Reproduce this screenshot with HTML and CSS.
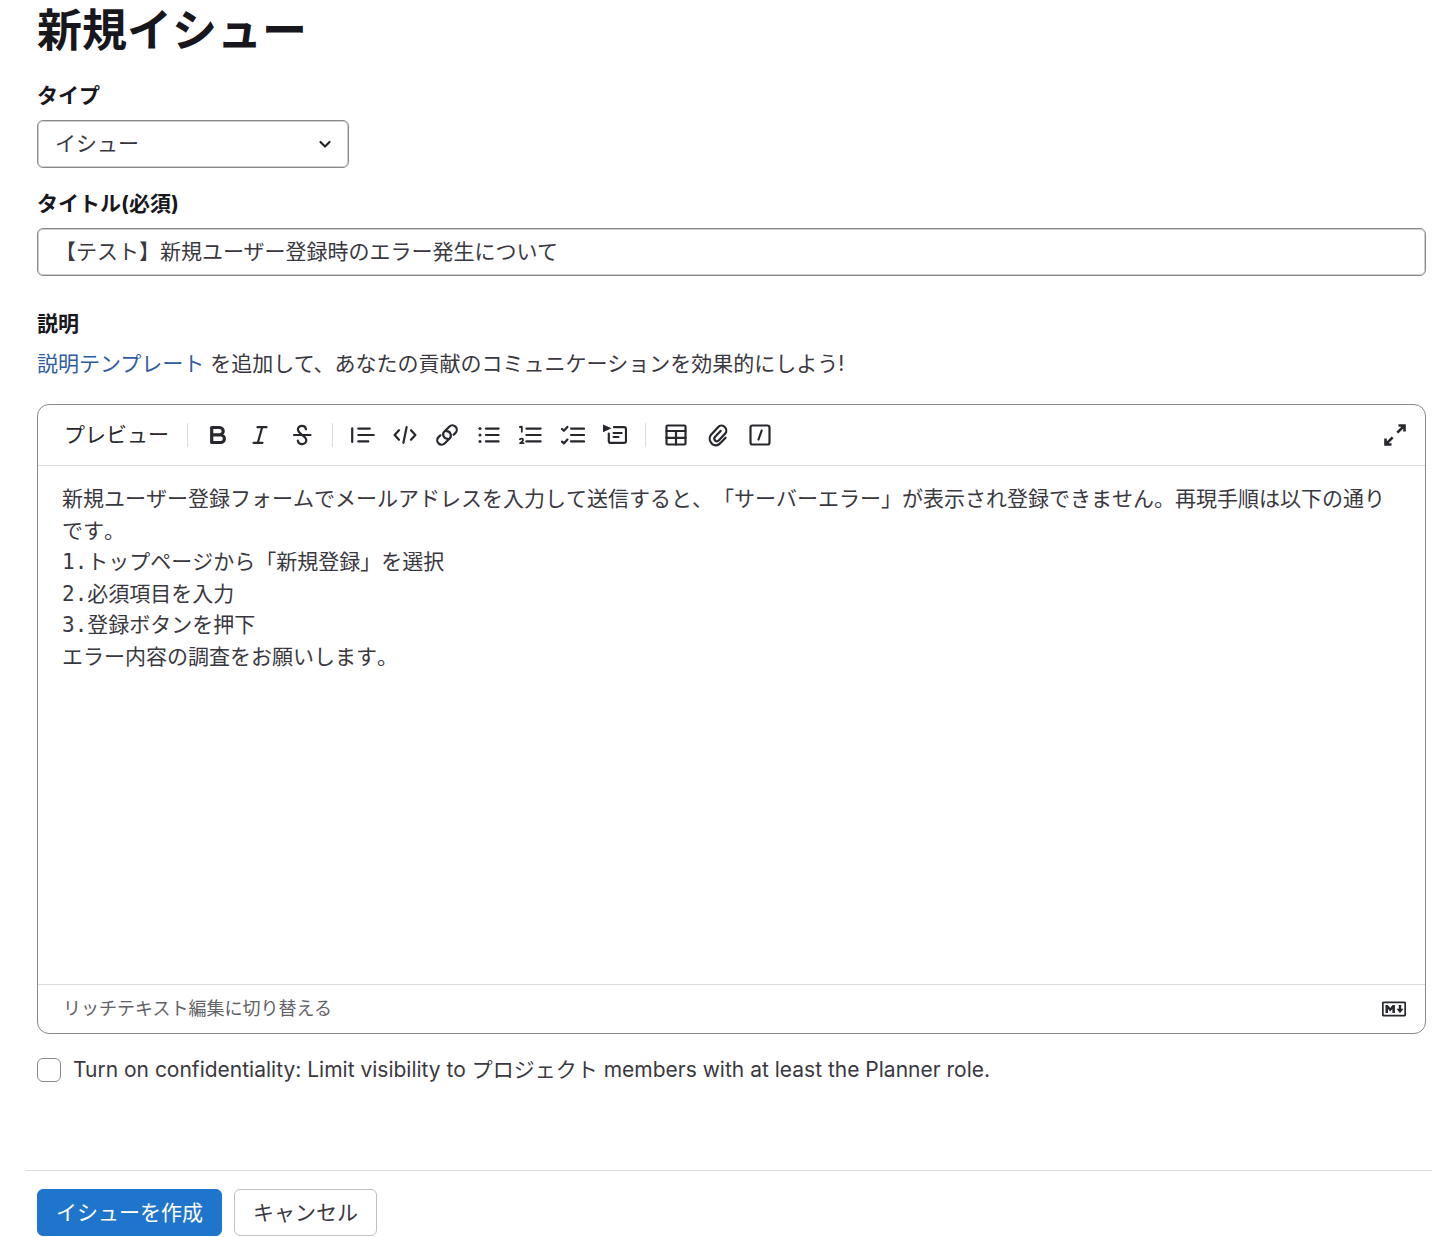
FILE: index.html
```html
<!DOCTYPE html>
<html lang="ja">
<head>
<meta charset="utf-8">
<meta name="viewport" content="width=device-width, initial-scale=1">
<title>新規イシュー</title>
<link rel="stylesheet" href="styles.css">
</head>
<body>
<main class="page">
  <h1 class="page-title">新規イシュー</h1>
  <form class="issue-form">
    <div class="field">
      <label class="field-label" for="issue-type">タイプ</label>
      <div class="select-wrap">
        <select class="control select" id="issue-type"><option>イシュー</option></select>
        <svg class="icon chevron" viewBox="0 0 24 24"><path d="M7.500 10l4.500 4.500 4.500-4.500"/></svg>
      </div>
    </div>
    <div class="field">
      <label class="field-label" for="issue-title">タイトル(必須)</label>
      <input class="control text-input" id="issue-title" type="text" value="【テスト】新規ユーザー登録時のエラー発生について">
    </div>
    <div class="field description">
      <label class="field-label" for="issue-description">説明</label>
      <p class="help"><a class="link" href="#">説明テンプレート</a> を追加して、あなたの貢献のコミュニケーションを効果的にしよう!</p>
      <div class="editor">
        <div class="toolbar">
          <button class="preview" type="button">プレビュー</button>
          <span class="divider"></span>
          <div class="tools">
            <button class="tool" type="button" aria-label="太字"><svg class="icon" viewBox="0 0 24 24"><path class="heavy" d="M5.700 4.500h7.800a3.700 3.700 0 0 1 0 7.400H5.700zM5.700 11.900h8.900a3.800 3.800 0 0 1 0 7.600H5.700z"/></svg></button>
            <button class="tool" type="button" aria-label="斜体"><svg class="icon" viewBox="0 0 24 24"><path d="M9.500 4.200h9M5.500 19.800h9M14.200 4.200l-4.400 15.600"/></svg></button>
            <button class="tool" type="button" aria-label="取り消し線"><svg class="icon" viewBox="0 0 24 24"><path d="M16 6.300C15.600 4 14 2.900 12 2.900c-2.300 0-4.100 1.500-4.100 3.700 0 2.400 1.900 3.600 4.200 5.400 2.500 1.700 4.200 2.900 4.200 5.300 0 2.200-1.800 3.800-4.200 3.800-2.200 0-3.900-1.300-4.300-3.500M4 12h16.500"/></svg></button>
          </div>
          <span class="divider"></span>
          <div class="tools">
            <button class="tool" type="button" aria-label="引用"><svg class="icon" viewBox="0 0 24 24"><path d="M1.200 5.300v13.600M7.300 5.600h11.500M7.300 12h15.500M7.300 18.400h10"/></svg></button>
            <button class="tool" type="button" aria-label="コード"><svg class="icon" viewBox="0 0 24 24"><path d="M6 7.200L1.600 12 6 16.800M18 7.200l4.400 4.800-4.400 4.800M13.600 4.200l-3.200 15.600"/></svg></button>
            <button class="tool" type="button" aria-label="リンク"><svg class="icon" viewBox="0 0 24 24"><path d="M18.600 11.800l1.900-1.900a4.200 4.200 0 0 0-6.300-6.200L9.400 8.500a4.300 4.300 0 0 0 3.100 7.300M5.400 12.200l-1.900 1.900a4.200 4.200 0 0 0 6.300 6.200l4.800-4.800a4.300 4.300 0 0 0-3.100-7.300"/></svg></button>
            <button class="tool" type="button" aria-label="箇条書き"><svg class="icon" viewBox="0 0 24 24"><path d="M8.900 5.600h12.700M8.900 12h12.700M8.900 18.400h12.700"/><g class="solid"><circle cx="3" cy="5.600" r="1.500"/><circle cx="3" cy="12" r="1.500"/><circle cx="3" cy="18.400" r="1.500"/></g></svg></button>
            <button class="tool" type="button" aria-label="番号付きリスト"><svg class="icon" viewBox="0 0 24 24"><path d="M7.400 5.600h14.200M7.400 12h14.200M7.400 18.400h14.200"/><path class="fine" d="M.9 4l1.900-.3v5.100M.9 16.200c1.500-1.200 3.200-.6 3.200.7 0 1.100-1.500 2-3 3.300h3.400"/></svg></button>
            <button class="tool" type="button" aria-label="チェックリスト"><svg class="icon" viewBox="0 0 24 24"><path d="M10 5.600h13M10 12h13M10 18.400h13M1 6l1.900 1.800L6.400 4M1 18.600l1.900 1.800 3.500-3.800"/></svg></button>
            <button class="tool" type="button" aria-label="折りたたみ可能なセクション"><svg class="icon" viewBox="0 0 24 24"><path d="M11 4.100h10a2 2 0 0 1 2 2v11.800a2 2 0 0 1-2 2H7.800a2 2 0 0 1-2-2v-7.300M10.600 10h8M10.600 14h4.900"/><path class="solid" d="M0 1.500l8.500 3.800L0 9.200z"/></svg></button>
          </div>
          <span class="divider"></span>
          <div class="tools">
            <button class="tool" type="button" aria-label="表"><svg class="icon" viewBox="0 0 24 24"><rect x="2.500" y="2.500" width="19" height="19" rx="1"/><path d="M2.500 8h19M2.500 14.800h19M12 8v13.500"/></svg></button>
            <button class="tool" type="button" aria-label="ファイルを添付"><svg class="icon" viewBox="0 0 24 24"><path d="M19.600 14.700l-4.900 5a5.700 5.700 0 0 1-9.700-.2 6.200 6.200 0 0 1 .3-8L12 4.300a4.300 4.300 0 0 1 6.900-.1 4.600 4.600 0 0 1 .1 6.500l-6.300 6.700a2.300 2.300 0 0 1-3.700-.1 2.700 2.700 0 0 1 .1-3.600l5.500-5.800"/></svg></button>
            <button class="tool" type="button" aria-label="クイックアクション"><svg class="icon" viewBox="0 0 24 24"><rect x="2.500" y="2.500" width="19" height="19" rx="2"/><path d="M13.700 7.500l-3.200 9"/></svg></button>
          </div>
          <button class="tool expand" type="button" aria-label="全画面表示"><svg class="icon" viewBox="0 0 24 24"><path class="sharp" d="M15.500 2.500h6v6M21.500 2.500l-7.200 7.200M8.500 21.500h-6v-6M2.500 21.500l7.200-7.200"/></svg></button>
        </div>
        <textarea class="editor-text" id="issue-description">新規ユーザー登録フォームでメールアドレスを入力して送信すると、「サーバーエラー」が表示され登録できません。再現手順は以下の通りです。
1.トップページから「新規登録」を選択
2.必須項目を入力
3.登録ボタンを押下
エラー内容の調査をお願いします。</textarea>
        <div class="editor-footer">
          <button class="switch" type="button">リッチテキスト編集に切り替える</button>
          <a class="markdown" href="#" aria-label="Markdown"><svg class="icon" viewBox="0 0 24 24"><rect class="fine" x=".8" y="5.300" width="22.400" height="13.400" rx="1"/><path class="solid" d="M3.500 16V8h2.300l2.400 3 2.400-3h2.300v8h-2.500v-4l-2.200 2.600L6 12v4zM16.800 8h2.400v3.800h2.300L18 16.300l-3.500-4.500h2.300z"/></svg></a>
        </div>
      </div>
    </div>
    <label class="confidential"><input class="checkbox" type="checkbox"><span>Turn on confidentiality: Limit visibility to プロジェクト members with at least the Planner role.</span></label>
    <div class="actions">
      <button class="button primary" type="submit">イシューを作成</button>
      <button class="button" type="button">キャンセル</button>
    </div>
  </form>
</main>
</body>
</html>
```
FILE: styles.css
```css
* {
  box-sizing: border-box;
}

body {
  margin: 0;
  background: #fff;
  color: #3a383f;
  font-family: Inter, "Noto Sans CJK JP", sans-serif;
  font-size: 21px;
  line-height: 32px;
  text-spacing-trim: space-all;
}

button,
input,
select,
textarea {
  margin: 0;
  color: inherit;
  font: inherit;
  text-spacing-trim: inherit;
}

button {
  padding: 0;
  border: 0;
  background: none;
  white-space: nowrap;
  cursor: pointer;
}

.page {
  padding: 4px 6px 0 37px;
}

.page-title {
  margin: 0 0 22px;
  color: #18171d;
  font-size: 45px;
  font-weight: 700;
  line-height: 54px;
}

.field {
  margin-bottom: 20px;
}

.field-label {
  display: block;
  margin-bottom: 8px;
  color: #18171d;
  font-weight: 700;
}

.control {
  display: block;
  width: 100%;
  height: 48px;
  padding: 0 17px;
  border: 1px solid #89888d;
  border-radius: 6px;
  background: #fff;
  box-shadow: inset 0 0 0 1px #d0cfd2;
}

.text-input {
  padding-bottom: 4px;
}

.select-wrap {
  display: grid;
  max-width: 312px;
  align-items: center;
}

.select-wrap > * {
  grid-area: 1 / 1;
}

.select {
  appearance: none;
}

.chevron {
  justify-self: end;
  margin-right: 12px;
  pointer-events: none;
}

.description {
  margin: 32px 0 20px;
}

.help {
  margin: 0 0 24px;
}

.link {
  color: #2f5ca0;
  text-decoration: none;
}

.editor {
  border: 1px solid #89888d;
  border-radius: 12px;
  overflow: hidden;
}

.toolbar {
  display: flex;
  align-items: center;
  height: 61px;
  padding: 0 12px;
  border-bottom: 1px solid #dcdcde;
  color: #28272d;
}

.preview {
  padding: 0 6px 0 14px;
}

.divider {
  width: 1px;
  height: 24px;
  margin: 0 12px;
  background: #dcdcde;
}

.tools {
  display: flex;
  gap: 6px;
}

.tool {
  display: grid;
  place-items: center;
  width: 36px;
  height: 36px;
}

.expand {
  margin-left: auto;
}

.icon {
  display: block;
  width: 24px;
  height: 24px;
  fill: none;
  stroke: #28272d;
  stroke-width: 2.2;
  stroke-linecap: round;
  stroke-linejoin: round;
}

.heavy {
  stroke-width: 3.2;
}

.fine {
  stroke-width: 1.8;
}

.sharp {
  stroke-width: 2.6;
  stroke-linecap: butt;
  stroke-linejoin: miter;
}

.solid {
  fill: #28272d;
  stroke: none;
}

.editor-text {
  display: block;
  width: 100%;
  height: 518px;
  padding: 18px 24px;
  border: 0;
  outline: 0;
  resize: none;
  background: transparent;
  font-family: "DejaVu Sans Mono", "Noto Sans CJK JP", monospace;
  font-kerning: none;
  line-height: 1.5;
}

.editor-footer {
  display: flex;
  align-items: center;
  justify-content: space-between;
  height: 49px;
  padding: 0 19px 0 25px;
  border-top: 1px solid #dcdcde;
}

.switch {
  color: #626168;
  font-size: 18px;
}

.confidential {
  display: flex;
  align-items: center;
  gap: 12px;
  min-height: 24px;
}

.checkbox {
  flex: none;
  appearance: none;
  width: 24px;
  height: 24px;
  border: 1px solid #89888d;
  border-radius: 6px;
  background: #fff;
}

.actions {
  display: flex;
  gap: 12px;
  margin: 84px -6px 0 -12px;
  padding: 18px 12px 1px;
  border-top: 1px solid #dcdcde;
}

.button {
  height: 47px;
  padding: 0 18px;
  border: 1px solid #bfbfc3;
  border-radius: 6px;
  background: #fff;
}

.primary {
  border-color: #1f75cb;
  background: #1f75cb;
  color: #fff;
}
```
